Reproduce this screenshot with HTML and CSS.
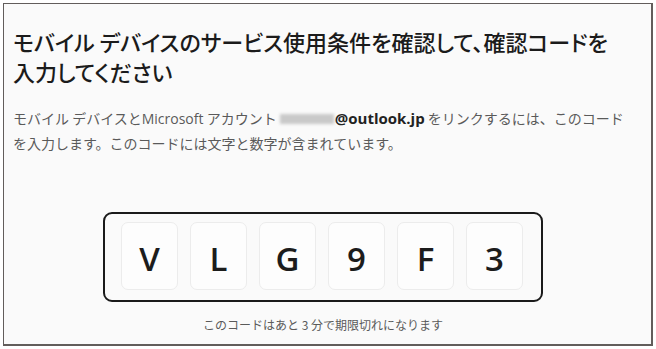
FILE: index.html
```html
<!DOCTYPE html>
<html lang="ja">
<head>
<meta charset="utf-8">
<link rel="stylesheet" href="styles.css">
</head>
<body>
<div class="frame">
  <h1 class="title">モバイル デバイスのサービス使用条件を確認して、確認コードを<br>入力してください</h1>
  <p class="desc">モバイル デバイスと<span class="latin">Microsoft</span> アカウント <span class="masked"></span><span class="email">@outlook.jp</span> をリンクするには、このコード<br>を入力します。このコードには文字と数字が含まれています。</p>
  <div class="code-wrap">
    <div class="code">
      <div class="cell">V</div>
      <div class="cell">L</div>
      <div class="cell">G</div>
      <div class="cell">9</div>
      <div class="cell">F</div>
      <div class="cell">3</div>
    </div>
  </div>
  <p class="expire">このコードはあと 3 分で期限切れになります</p>
</div>
</body>
</html>
```
FILE: styles.css
```css
html, body {
  margin: 0;
  padding: 0;
  background: #ffffff;
}
body {
  padding: 3px;
  font-family: "Noto Sans CJK JP", "Noto Sans", sans-serif;
}
.frame {
  box-sizing: border-box;
  width: 650px;
  height: 343px;
  border: 2px solid #625d5b;
  border-left-width: 1px;
  border-top-width: 1px;
  background: #fafafa;
  padding: 22px 8px 0 9px;
  display: flex;
  flex-direction: column;
}
.title {
  margin: 0;
  font-size: 22px;
  line-height: 30px;
  font-weight: 500;
  color: #1b1b1b;
  font-feature-settings: "palt";
  white-space: nowrap;
}
.desc {
  margin: 20px 0 0 0;
  font-size: 14px;
  line-height: 24px;
  color: #5a5a5a;
  white-space: nowrap;
}
.latin {
  font-family: "Open Sans", "Noto Sans", sans-serif;
}
.masked {
  display: inline-block;
  width: 54px;
  height: 10px;
  margin-right: 1px;
  background: #c9c9c9;
  filter: blur(1.5px);
  vertical-align: 0px;
}
.email {
  font-family: "Open Sans", "Noto Sans", sans-serif;
  font-weight: 700;
  font-size: 15px;
  color: #222222;
}
.code-wrap {
  display: flex;
  justify-content: center;
  margin-top: 57px;
  padding-right: 10px;
}
.code {
  display: flex;
  gap: 12px;
  padding: 8px 18px 10px 16px;
  border: 2px solid #1a1a1a;
  border-radius: 9px;
}
.cell {
  box-sizing: border-box;
  width: 57px;
  height: 68px;
  border: 1px solid #ececec;
  border-radius: 7px;
  background: #fdfdfd;
  display: flex;
  align-items: center;
  justify-content: center;
  font-family: "Open Sans", "Noto Sans", sans-serif;
  font-weight: 600;
  font-size: 33px;
  color: #1c1c1c;
  padding-top: 4px;
}
.expire {
  margin: 13px 0 0 0;
  padding-right: 10px;
  text-align: center;
  font-size: 12px;
  line-height: 20px;
  color: #5a5a5a;
}
```
